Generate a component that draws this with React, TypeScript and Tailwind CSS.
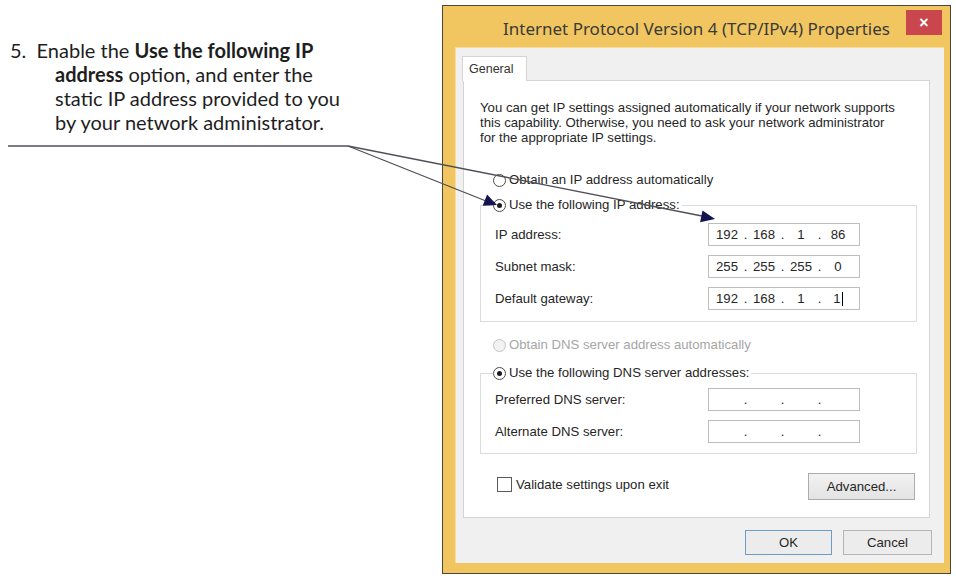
import type { ReactNode } from "react";

const ipFields = [
  { label: "IP address:", value: ["192", "168", "1", "86"] },
  { label: "Subnet mask:", value: ["255", "255", "255", "0"] },
  { label: "Default gateway:", value: ["192", "168", "1", "1"], caret: true },
];

const dnsFields = [
  { label: "Preferred DNS server:", value: ["", "", "", ""] },
  { label: "Alternate DNS server:", value: ["", "", "", ""] },
];

function Radio({ checked, disabled }: { checked?: boolean; disabled?: boolean }) {
  return (
    <span
      className={`flex h-[13px] w-[13px] shrink-0 items-center justify-center rounded-full border ${
        disabled ? "border-[#c4c4c4] bg-[#f2f2f2]" : "border-[#4a4a4a] bg-white"
      }`}
    >
      {checked && <span className="h-[5px] w-[5px] rounded-full bg-[#1a1a1a]" />}
    </span>
  );
}

function RadioLabel({
  children,
  checked,
  disabled,
}: {
  children: ReactNode;
  checked?: boolean;
  disabled?: boolean;
}) {
  return (
    <span className="flex h-[16px] items-center gap-[3px] pr-[2px]">
      <Radio checked={checked} disabled={disabled} />
      <span className={disabled ? "text-[#a6a6a6]" : "text-[#262626]"}>{children}</span>
    </span>
  );
}

function IpInput({ value, caret }: { value: string[]; caret?: boolean }) {
  return (
    <div className="flex h-[23px] w-[152px] items-center border border-[#bdbdbd] bg-white pl-[4px] text-[#262626]">
      {value.map((octet, i) => (
        <span key={i} className="flex items-center">
          {i > 0 && <span className="w-[9px] text-center">.</span>}
          <span className="w-[28px] text-center">
            {octet}
            {caret && i === 3 && <span className="ml-[1px] inline-block h-[14px] w-px bg-black align-middle" />}
          </span>
        </span>
      ))}
    </div>
  );
}

function FieldRow({ label, value, caret }: { label: string; value: string[]; caret?: boolean }) {
  return (
    <div className="flex items-center">
      <span className="w-[213px] text-[#262626]">{label}</span>
      <IpInput value={value} caret={caret} />
    </div>
  );
}

function Instruction() {
  return (
    <div className="w-[442px] shrink-0 pt-[38px] font-['Lato',sans-serif] text-[20px] leading-[24px] text-[#1e1e1e]">
      <p className="whitespace-nowrap pl-[55px] -indent-[45px]">
        5.&nbsp; Enable the <b className="font-bold">Use the following IP</b>
        <br />
        <b className="font-bold">address</b> option, and enter the
        <br />
        static IP address provided to you
        <br />
        by your network administrator.
      </p>
    </div>
  );
}

function Dialog() {
  return (
    <div className="mt-[5px] flex h-[569px] w-[509px] shrink-0 flex-col border border-[#4b463c] bg-[#f1c660] font-['Liberation_Sans',sans-serif] text-[13.2px]">
      {/* title bar */}
      <div className="grid h-[41px] grid-cols-[50px_1fr_50px] items-start">
        <div />
        <div className="pt-[11px] text-center font-['Noto_Sans',sans-serif] text-[17px] leading-[24px] text-[#3a3a3a]">
          Internet Protocol Version 4 (TCP/IPv4) Properties
        </div>
        <div className="flex justify-end pr-[8px] pt-[4px]">
          <div className="flex h-[25px] w-[36px] items-center justify-center bg-[#c8464c] text-[16px] font-bold leading-none text-white">
            ×
          </div>
        </div>
      </div>

      {/* client area */}
      <div className="mb-[10px] ml-[12px] mr-[6px] flex flex-1 flex-col border-l border-t border-[#f8dd98] bg-[#f0f0f0] pl-[6px] pt-[8px]">
        <div className="relative z-10 -mb-px flex h-[25px] w-[65px] items-center border border-b-0 border-[#d4d4d4] bg-white pl-[6px] text-[12.5px] text-[#333]">
          General
        </div>
        <div className="ml-[1px] flex h-[438px] w-[467px] flex-col border border-[#d4d4d4] bg-white pl-[16px] pr-[12px] pt-[19px]">
          <p className="whitespace-nowrap leading-[15px] text-[#262626]">
            You can get IP settings assigned automatically if your network supports
            <br />
            this capability. Otherwise, you need to ask your network administrator
            <br />
            for the appropriate IP settings.
          </p>

          <div className="ml-[13px] mt-[27px]">
            <RadioLabel>Obtain an IP address automatically</RadioLabel>
          </div>

          <fieldset className="mt-[9px] border border-[#dcdcdc]">
            <legend className="ml-[12px]">
              <RadioLabel checked>Use the following IP address:</RadioLabel>
            </legend>
            <div className="flex flex-col gap-[9px] pb-[11px] pl-[14px] pt-[10px]">
              {ipFields.map((f) => (
                <FieldRow key={f.label} label={f.label} value={f.value} caret={f.caret} />
              ))}
            </div>
          </fieldset>

          <div className="ml-[13px] mt-[15px]">
            <RadioLabel disabled>Obtain DNS server address automatically</RadioLabel>
          </div>

          <fieldset className="mt-[12px] border border-[#dcdcdc]">
            <legend className="ml-[12px]">
              <RadioLabel checked>Use the following DNS server addresses:</RadioLabel>
            </legend>
            <div className="flex flex-col gap-[9px] pb-[10px] pl-[14px] pt-[7px]">
              {dnsFields.map((f) => (
                <FieldRow key={f.label} label={f.label} value={f.value} />
              ))}
            </div>
          </fieldset>

          <div className="mt-[19px] flex items-start justify-between pl-[17px] pr-[2px]">
            <div className="mt-[2px] flex items-center gap-[4px]">
              <span className="h-[15px] w-[15px] border border-[#5a5a5a] bg-white" />
              <span className="text-[#262626]">Validate settings upon exit</span>
            </div>
            <div className="flex h-[27px] w-[107px] items-center justify-center border border-[#acacac] bg-gradient-to-b from-[#f2f2f2] to-[#e3e3e3] text-[#262626]">
              Advanced...
            </div>
          </div>
        </div>

        <div className="mt-[12px] flex justify-end gap-[11px] pr-[12px]">
          <div className="flex h-[25px] w-[87px] items-center justify-center border border-[#6f9cc4] bg-[#ececec] text-[#262626]">
            OK
          </div>
          <div className="flex h-[25px] w-[89px] items-center justify-center border border-[#b5b5b5] bg-[#ececec] text-[#262626]">
            Cancel
          </div>
        </div>
      </div>
    </div>
  );
}

function Callout() {
  return (
    <svg
      className="pointer-events-none absolute inset-0"
      width="956"
      height="576"
      viewBox="0 0 956 576"
    >
      <g stroke="#4f4f58" strokeWidth="1.3" fill="none">
        <line x1="8" y1="146" x2="348" y2="146" />
        <line x1="348" y1="146" x2="486" y2="201" />
        <line x1="348" y1="146" x2="702" y2="216" />
      </g>
      <polygon points="497,205 482.7,205.8 487.1,194.6" fill="#141450" />
      <polygon points="715,219 700.1,222.2 702.5,210.4" fill="#141450" />
    </svg>
  );
}

export default function App() {
  return (
    <div className="relative flex h-[576px] w-[956px] overflow-hidden bg-white">
      <Instruction />
      <Dialog />
      <Callout />
    </div>
  );
}
